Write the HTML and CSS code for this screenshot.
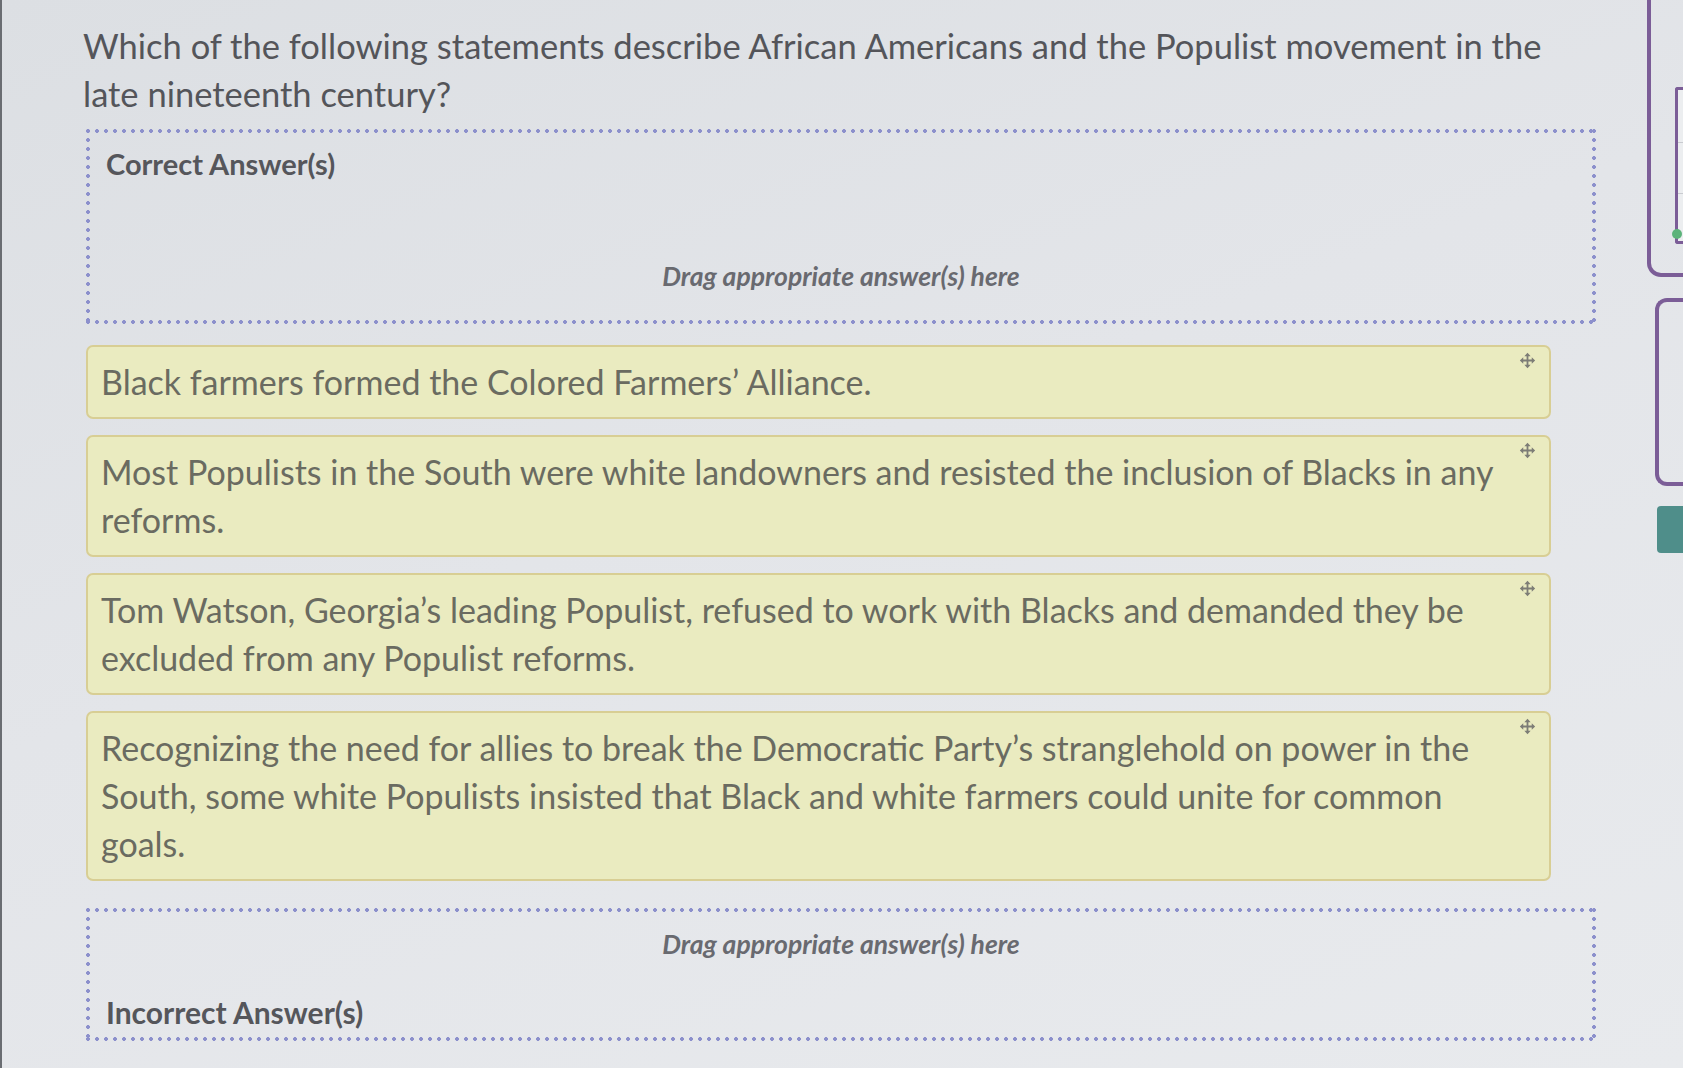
FILE: index.html
```html
<!DOCTYPE html>
<html lang="en">
<head>
<meta charset="utf-8">
<title>Populist movement question</title>
<link rel="stylesheet" href="styles.css">
</head>
<body>
<div class="page">
  <main class="question">
    <h1 class="prompt">Which of the following statements describe African Americans and the Populist movement in the late nineteenth century?</h1>

    <section class="zone zone-correct">
      <div class="zone-label">Correct Answer(s)</div>
      <div class="zone-hint">Drag appropriate answer(s) here</div>
    </section>

    <ul class="cards">
      <li class="card">
        <span class="card-text">Black farmers formed the Colored Farmers’ Alliance.</span>
        <svg class="move" viewBox="0 0 16 16" aria-hidden="true"><path d="M8 3v10M3 8h10" stroke="#7d7d76" stroke-width="1.7" fill="none"/><path d="M8 0.8 11 4H5zM8 15.2 5 12h6zM0.8 8 4 5v6zM15.2 8 12 11V5z" fill="#7d7d76"/></svg>
      </li>
      <li class="card">
        <span class="card-text">Most Populists in the South were white landowners and resisted the inclusion of Blacks in any reforms.</span>
        <svg class="move" viewBox="0 0 16 16" aria-hidden="true"><path d="M8 3v10M3 8h10" stroke="#7d7d76" stroke-width="1.7" fill="none"/><path d="M8 0.8 11 4H5zM8 15.2 5 12h6zM0.8 8 4 5v6zM15.2 8 12 11V5z" fill="#7d7d76"/></svg>
      </li>
      <li class="card">
        <span class="card-text">Tom Watson, Georgia’s leading Populist, refused to work with Blacks and demanded they be excluded from any Populist reforms.</span>
        <svg class="move" viewBox="0 0 16 16" aria-hidden="true"><path d="M8 3v10M3 8h10" stroke="#7d7d76" stroke-width="1.7" fill="none"/><path d="M8 0.8 11 4H5zM8 15.2 5 12h6zM0.8 8 4 5v6zM15.2 8 12 11V5z" fill="#7d7d76"/></svg>
      </li>
      <li class="card">
        <span class="card-text">Recognizing the need for allies to break the Democratic Party’s stranglehold on power in the South, some white Populists insisted that Black and white farmers could unite for common goals.</span>
        <svg class="move" viewBox="0 0 16 16" aria-hidden="true"><path d="M8 3v10M3 8h10" stroke="#7d7d76" stroke-width="1.7" fill="none"/><path d="M8 0.8 11 4H5zM8 15.2 5 12h6zM0.8 8 4 5v6zM15.2 8 12 11V5z" fill="#7d7d76"/></svg>
      </li>
    </ul>

    <section class="zone zone-incorrect">
      <div class="zone-hint">Drag appropriate answer(s) here</div>
      <div class="zone-label">Incorrect Answer(s)</div>
    </section>
  </main>

  <aside class="side">
    <div class="panel panel-top">
      <div class="mini">
        <span class="mini-line"></span>
        <span class="mini-line"></span>
        <span class="mini-dot"></span>
      </div>
    </div>
    <div class="panel panel-mid"></div>
    <div class="side-button"></div>
  </aside>
</div>
</body>
</html>
```

FILE: styles.css
```css
* { box-sizing: border-box; }

html, body {
  margin: 0;
  padding: 0;
  height: 100%;
}

body {
  background: linear-gradient(160deg, #dcdfe3 0%, #e3e5e9 45%, #e8eaed 100%);
  font-family: Lato, "Open Sans", sans-serif;
  overflow: hidden;
}

.page {
  display: flex;
  height: 1068px;
  border-left: 2px solid #6a6d72;
}

.question {
  width: 1645px;
  flex: none;
  padding: 22px 0 0 81px;
  display: flex;
  flex-direction: column;
}

.prompt {
  margin: 0;
  width: 1510px;
  font-size: 34.5px;
  font-weight: 400;
  line-height: 48px;
  color: #54555a;
}

.zone {
  --dot: #8c90cc;
  margin-left: 3px;
  width: 1510px;
  padding: 18px 20px 14px;
  display: flex;
  flex-direction: column;
  background-image:
    radial-gradient(circle at 2px 2px, var(--dot) 1.6px, transparent 2.2px),
    radial-gradient(circle at 2px 2px, var(--dot) 1.6px, transparent 2.2px),
    radial-gradient(circle at 2px 2px, var(--dot) 1.6px, transparent 2.2px),
    radial-gradient(circle at 2px 2px, var(--dot) 1.6px, transparent 2.2px);
  background-size: 9px 4px, 9px 4px, 4px 9px, 4px 9px;
  background-position: 0 0, 0 100%, 0 0, 100% 0;
  background-repeat: repeat-x, repeat-x, repeat-y, repeat-y;
}

.zone-label {
  font-size: 29px;
  font-weight: 700;
  line-height: 34px;
  color: #55565b;
}

.zone-hint {
  font-size: 26.5px;
  font-weight: 700;
  font-style: italic;
  line-height: 32px;
  color: #696a70;
  text-align: center;
}

.zone-correct {
  margin-top: 11px;
  height: 195px;
}

.zone-correct .zone-hint {
  margin-top: 79px;
}

.zone-incorrect {
  margin-top: 27px;
  height: 133px;
  padding-top: 20px;
}

.zone-incorrect .zone-label {
  margin-top: 35px;
  font-size: 30px;
}

.cards {
  list-style: none;
  margin: 21px 0 0 3px;
  padding: 0;
  width: 1465px;
  display: flex;
  flex-direction: column;
  gap: 16px;
}

.card {
  position: relative;
  background: #eaebc0;
  border: 2px solid #d8ce94;
  border-radius: 7px;
  padding: 11px 48px 11px 13px;
  font-size: 34px;
  line-height: 48px;
  color: #6a6b61;
}

.move {
  position: absolute;
  top: 5px;
  right: 13px;
  width: 17px;
  height: 17px;
}

.side {
  flex: 1;
  display: flex;
  flex-direction: column;
}

.panel {
  border: 4px solid #7b5d97;
}

.panel-top {
  margin-top: -12px;
  height: 289px;
  border-right: none;
  border-radius: 0 0 0 14px;
  padding: 95px 0 0 24px;
}

.mini {
  position: relative;
  height: 157px;
  border: 3px solid #7b5d97;
  border-right: none;
  border-radius: 3px 0 0 3px;
  background: #eceef0;
  display: flex;
  flex-direction: column;
  gap: 50px;
  padding-top: 52px;
}

.mini-line {
  display: block;
  height: 1px;
  background: #c9cbd0;
}

.mini-dot {
  position: absolute;
  left: -6px;
  bottom: 2px;
  width: 10px;
  height: 10px;
  border-radius: 50%;
  background: #5cb37a;
}

.panel-mid {
  margin: 21px 0 0 8px;
  height: 188px;
  border-right: none;
  border-radius: 12px 0 0 12px;
}

.side-button {
  margin: 20px 0 0 10px;
  height: 47px;
  background: #4f8e8a;
  border-radius: 4px 0 0 4px;
}
```
